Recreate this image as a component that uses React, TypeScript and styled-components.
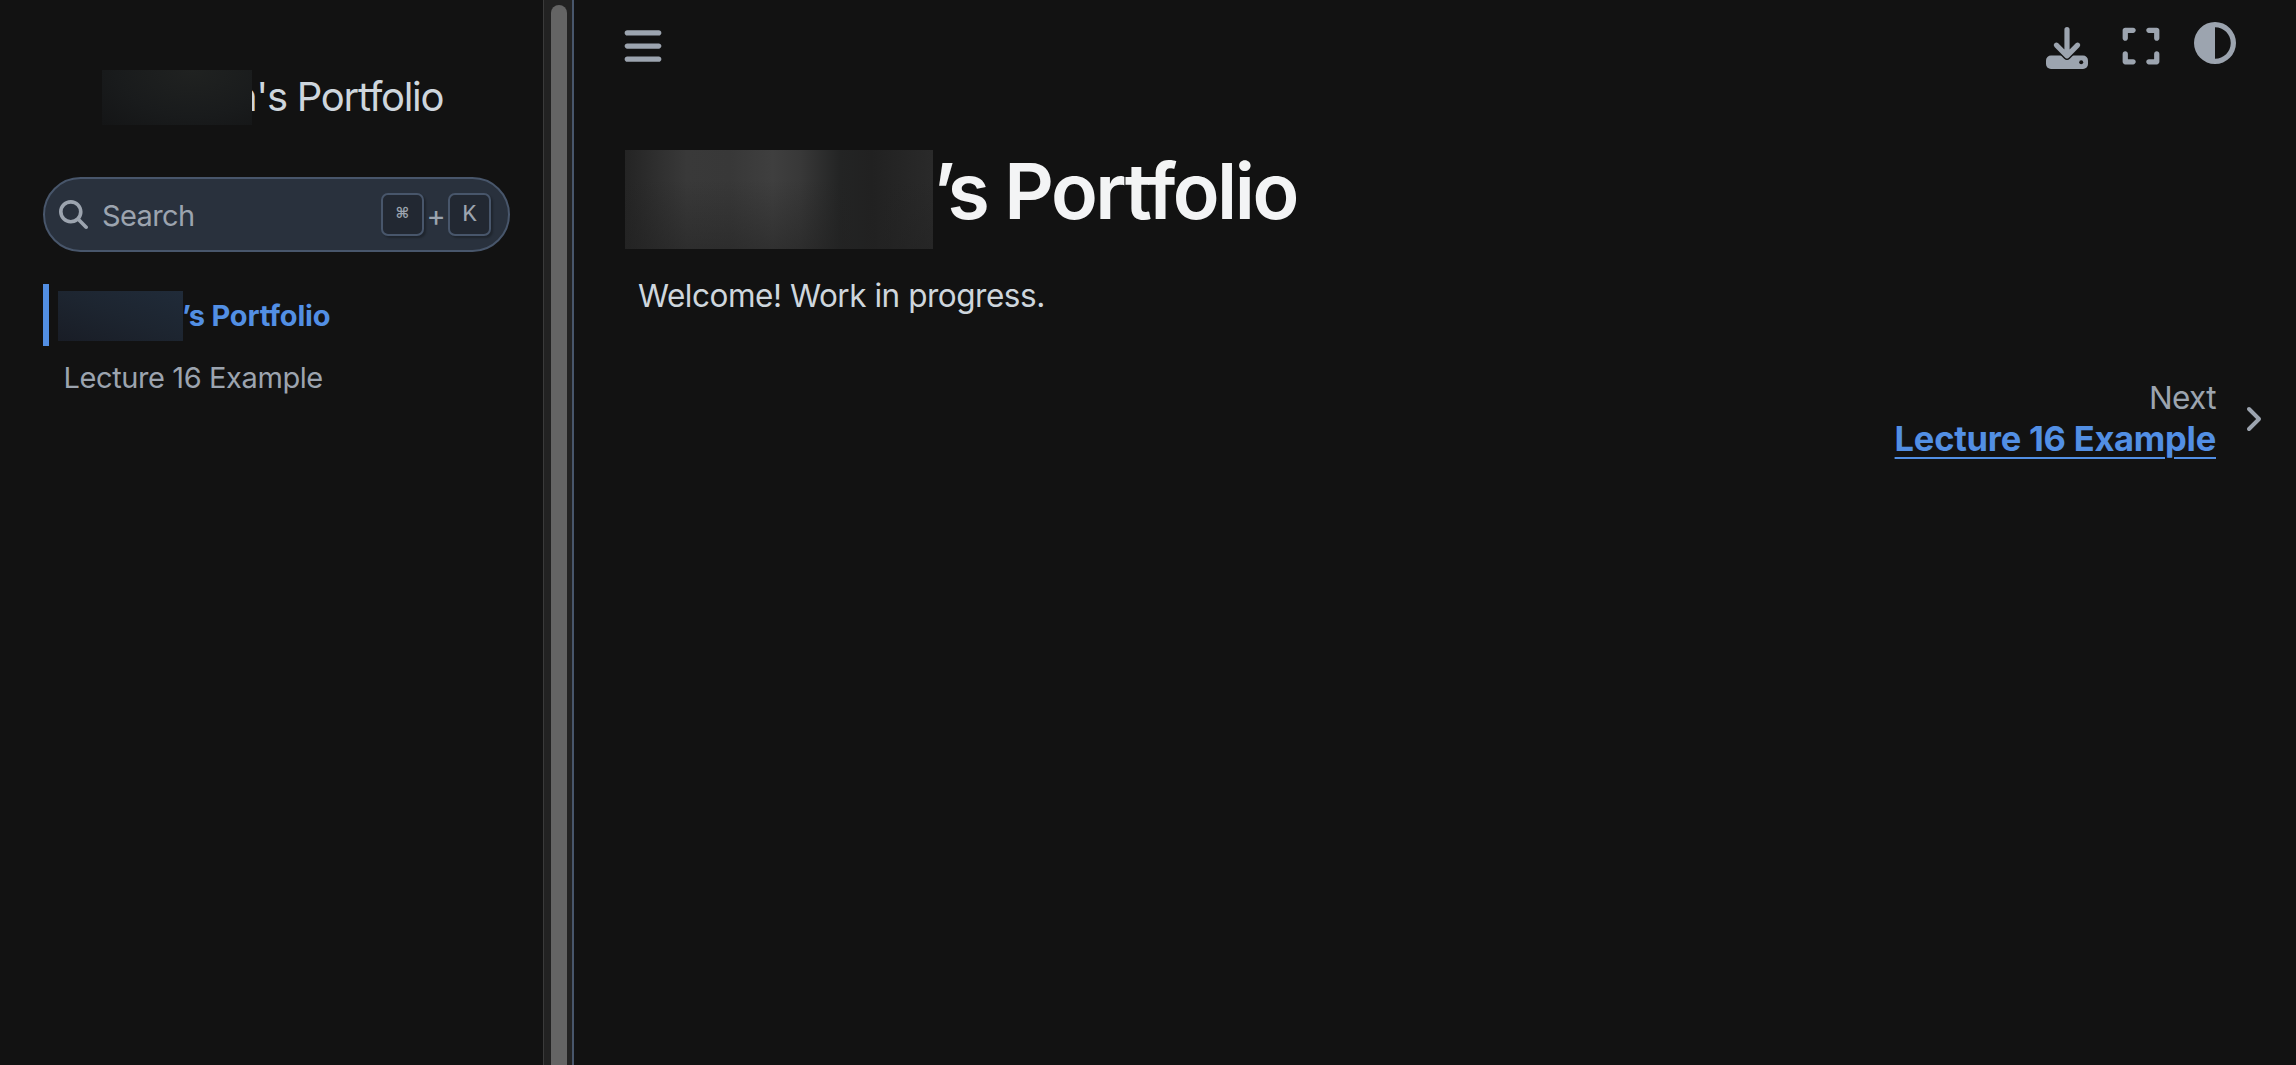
import styled, { createGlobalStyle } from "styled-components";
import {
  FaAngleRight,
  FaBars,
  FaCircleHalfStroke,
  FaExpand,
  FaMagnifyingGlass,
} from "react-icons/fa6";

const palette = {
  background: "#121212",
  surface: "#29313d",
  key: "#222832",
  border: "#48566b",
  base: "#ced6dd",
  muted: "#9ca4af",
  heading: "#f3f4f5",
  primary: "#528fe4",
};

const arrow = "M21 2.7V28M10.4 18.2 21 28.8 31.6 18.2";

const DownloadIcon = () => (
  <svg
    width="42"
    height="42"
    viewBox="0 0 42 42"
    fill="none"
    strokeLinecap="round"
    strokeLinejoin="round"
  >
    <rect y="28.6" width="42" height="13.4" rx="5" fill="currentColor" />
    <circle cx="35.2" cy="35.2" r="2" fill={palette.background} />
    <path d={arrow} stroke={palette.background} strokeWidth="8" />
    <path d={arrow} stroke="currentColor" strokeWidth="5.2" />
  </svg>
);

const App = () => {
  return (
    <>
      <GlobalStyle />
      <Page>
        <Sidebar>
          <SidebarContent>
            <Brand>
              <BrandMask />
              <BrandText>n's Portfolio</BrandText>
            </Brand>
            <SearchButton>
              <FaMagnifyingGlass size={29} />
              <SearchLabel>Search</SearchLabel>
              <Key $small>⌘</Key>
              <Plus>+</Plus>
              <Key>K</Key>
            </SearchButton>
            <NavList>
              <NavItem $active>
                <NavMask />
                <span>’s Portfolio</span>
              </NavItem>
              <NavItem>Lecture 16 Example</NavItem>
            </NavList>
          </SidebarContent>
          <ScrollTrack>
            <ScrollThumb />
          </ScrollTrack>
        </Sidebar>
        <Main>
          <Header>
            <FaBars size={42} />
            <HeaderActions>
              <DownloadIcon />
              <ExpandIcon size={42} />
              <ThemeIcon size={42} />
            </HeaderActions>
          </Header>
          <Heading>
            <HeadingMask />
            <HeadingText>’s Portfolio</HeadingText>
          </Heading>
          <Paragraph>Welcome! Work in progress.</Paragraph>
          <NextLink>
            <NextInfo>
              <NextLabel>Next</NextLabel>
              <NextTitle>Lecture 16 Example</NextTitle>
            </NextInfo>
            <NextIcon size={32} />
          </NextLink>
        </Main>
      </Page>
    </>
  );
};

export default App;

const GlobalStyle = createGlobalStyle`
  * {
    box-sizing: border-box;
  }

  body {
    margin: 0;
    background: ${palette.background};
    color: ${palette.base};
    font-family: Inter, "Liberation Sans", sans-serif;
    font-weight: 400;
  }

  svg {
    display: block;
    flex-shrink: 0;
  }
`;

const Page = styled.div`
  height: 100vh;
  display: flex;
  overflow: hidden;
`;

const Sidebar = styled.aside`
  width: 574px;
  display: flex;
  flex-shrink: 0;
  border-right: 2px solid ${palette.border};
`;

const SidebarContent = styled.div`
  width: 543px;
  padding: 70px 33px 0 43px;
`;

const ScrollTrack = styled.div`
  width: 29px;
  padding: 5px 5px 0 7px;
  background: #222222;
  border-left: 1px solid #3a3a3a;
`;

const ScrollThumb = styled.div`
  width: 16px;
  height: 1100px;
  border-radius: 8px;
  background: #646464;
`;

const Brand = styled.div`
  height: 55px;
  padding-left: 59px;
  display: flex;
`;

const BrandMask = styled.div`
  z-index: 1;
  width: 150px;
  height: 55px;
  background: radial-gradient(ellipse at 60% 0%, #202221 0%, #191b1c 60%, #141516 100%);
`;

const BrandText = styled.div`
  margin-left: -18px;
  font-size: 40px;
  line-height: 54px;
  letter-spacing: -1.3px;
  white-space: nowrap;
`;

const SearchButton = styled.div`
  width: 467px;
  height: 75px;
  margin-top: 52px;
  padding: 0 17px 0 14px;
  display: flex;
  align-items: center;
  color: ${palette.muted};
  background: ${palette.surface};
  border: 2px solid ${palette.border};
  border-radius: 38px;
`;

const SearchLabel = styled.span`
  flex: 1;
  margin-left: 14px;
  padding-top: 2px;
  font-size: 29px;
  letter-spacing: -0.6px;
`;

const Key = styled.kbd<{ $small?: boolean }>`
  width: 43px;
  height: 43px;
  padding-bottom: ${({ $small }) => ($small ? 4 : 1)}px;
  display: flex;
  justify-content: center;
  align-items: center;
  font-family: ${({ $small }) =>
    $small ? `"DejaVu Sans", sans-serif` : `"Liberation Mono", monospace`};
  font-size: ${({ $small }) => ($small ? 15 : 24)}px;
  font-weight: ${({ $small }) => ($small ? 700 : 400)};
  background: ${palette.key};
  border: 2px solid ${palette.border};
  border-radius: 7px;
  box-shadow: 2px 2px 2px rgba(0, 0, 0, 0.25);
`;

const Plus = styled.span`
  width: 24px;
  padding-top: 2px;
  text-align: center;
  font-size: 29px;
`;

const NavList = styled.nav`
  margin-top: 32px;
`;

const NavItem = styled.div<{ $active?: boolean }>`
  height: 62px;
  padding-left: ${({ $active }) => ($active ? 9 : 20.5)}px;
  display: flex;
  align-items: center;
  border-left: ${({ $active }) =>
    $active ? `6px solid ${palette.primary}` : "none"};
  color: ${({ $active }) => ($active ? palette.primary : palette.muted)};
  font-size: 29px;
  font-weight: ${({ $active }) => ($active ? 700 : 400)};
  letter-spacing: ${({ $active }) => ($active ? -0.2 : -0.4)}px;
`;

const NavMask = styled.div`
  width: 125px;
  height: 50px;
  margin: 2px -1px 0 0;
  background: linear-gradient(20deg, #191d26 0%, #1d2530 50%, #202b39 100%);
`;

const Main = styled.main`
  flex: 1;
  padding: 0 27px 0 51px;
`;

const Header = styled.header`
  height: 96px;
  margin-left: -3px;
  padding: 25px 33px 0 0;
  display: flex;
  justify-content: space-between;
  color: ${palette.muted};
`;

const HeaderActions = styled.div`
  padding-top: 2px;
  display: flex;
  gap: 32px;
`;

const ExpandIcon = styled(FaExpand)`
  margin-top: -2px;
`;

const ThemeIcon = styled(FaCircleHalfStroke)`
  margin-top: -5px;
`;

const Heading = styled.h1`
  height: 99px;
  margin: 54px 0 0;
  display: flex;
  color: ${palette.heading};
  font-size: 77px;
  font-weight: 600;
  line-height: 82px;
`;

const HeadingMask = styled.div`
  width: 308px;
  height: 99px;
  background:
    linear-gradient(180deg, rgba(34, 34, 34, 0) 30%, rgba(34, 34, 34, 0.5) 100%),
    linear-gradient(
      90deg,
      #242424 0%,
      #393939 20%,
      #383838 34%,
      #3f3f3f 48%,
      #383838 57%,
      #232424 70%,
      #212121 80%,
      #2a2a2a 100%
    );
`;

const HeadingText = styled.span`
  letter-spacing: -2.5px;
`;

const Paragraph = styled.p`
  margin: 26px 0 0 13px;
  font-size: 31.5px;
  line-height: 42px;
  letter-spacing: -0.47px;
`;

const NextLink = styled.div`
  margin-top: 60px;
  display: flex;
  justify-content: flex-end;
  align-items: center;
  color: ${palette.muted};
`;

const NextInfo = styled.div`
  margin-right: 21px;
  text-align: right;
`;

const NextLabel = styled.div`
  font-size: 31.5px;
  line-height: 41px;
  letter-spacing: -0.6px;
`;

const NextTitle = styled.div`
  color: ${palette.primary};
  font-size: 34.5px;
  font-weight: 700;
  line-height: 41px;
  letter-spacing: -0.25px;
  text-decoration: underline;
  text-decoration-thickness: 2px;
  text-underline-offset: 6px;
`;

const NextIcon = styled(FaAngleRight)`
  margin-top: 2px;
`;
